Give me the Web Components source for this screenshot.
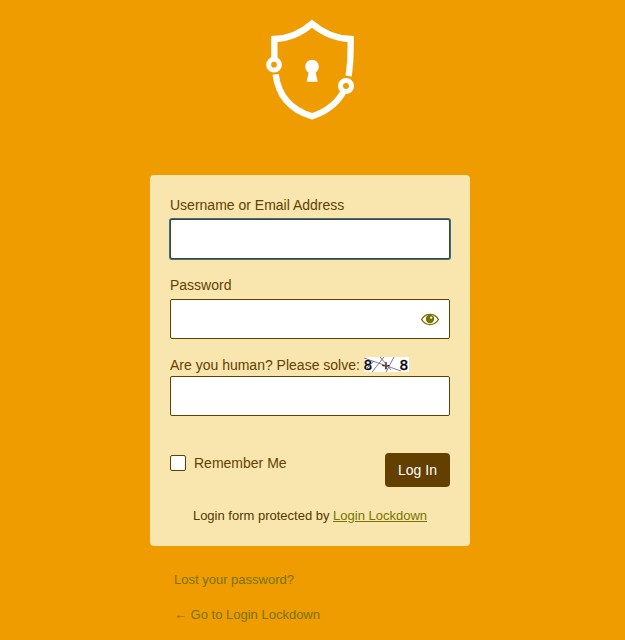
<!DOCTYPE html>
<html lang="en">
<head>
<meta charset="utf-8">
<title>Log In</title>
<style>
html,body{margin:0;height:100%;background:#ef9c00}
body{font:14px/21px "Liberation Sans",Arial,sans-serif;color:#633f00;overflow:hidden}
</style>
</head>
<body>
<login-page></login-page>
<script>
const define = (name, html) => customElements.define(name, class extends HTMLElement {
  constructor() {
    super();
    this.attachShadow({mode: 'open'}).innerHTML = html;
  }
});

define('shield-logo', `
<style>:host{display:block;width:110px;height:120px}svg{display:block}</style>
<svg width="110" height="120" viewBox="0 0 330 360" fill="none" stroke="#fff" stroke-width="19">
  <path d="M58 146V87C98 86 137 71 171 41C206 71 247 86 287 87V112C287 150 285 172 281 198"/>
  <path d="M62 193C70 258 109 300 171 319C214 305 245 281 265 246"/>
  <circle cx="57" cy="164" r="16" stroke-width="15"/>
  <circle cx="273" cy="228" r="16.500" stroke-width="15"/>
  <g fill="#fff" stroke="none"><circle cx="171" cy="170" r="20.500"/><path d="M162 182L155 215H188L181 182Z"/></g>
</svg>`);

define('eye-icon', `
<style>:host{display:block;width:20px;height:20px}svg{display:block}</style>
<svg width="20" height="20" viewBox="0 0 20 20">
  <path d="M1.600 10.500C3.600 7 6.600 5.400 10 5.400S16.400 7 18.400 10.500C16.400 14 13.400 15.600 10 15.600S3.600 14 1.600 10.500Z" fill="none" stroke="#777301" stroke-width="1.400"/>
  <circle cx="10" cy="10" r="4.200" fill="#777301"/>
  <circle cx="11.200" cy="8.700" r="1.100" fill="#fff"/>
</svg>`);

define('captcha-sum', `
<style>:host{display:inline-block;width:45px;height:15px;vertical-align:-2px}svg{display:block}
text{font:14.500px "DejaVu Sans Mono","Liberation Mono",monospace;fill:#000;stroke:#000;stroke-width:.35px}</style>
<svg width="45" height="15" viewBox="0 0 45 15">
  <rect width="45" height="15" fill="#fff"/>
  <text x="-.500" y="13">8</text><text x="18" y="13" style="font-size:13px">+</text><text x="35.500" y="13">8</text>
  <g fill="none" stroke="#7c6686" stroke-width=".9"><path d="M0 1L37 14M8 15L20 0M16 0L27 13M22 15L30 0M1 13L10 4"/></g>
</svg>`);

define('text-field', `
<style>
:host{display:block}
label{display:block;height:var(--label-height,24px)}
.box{box-sizing:border-box;width:280px;height:40px;background:#fff;border:1px solid #633f00;border-radius:2px;display:flex;align-items:center;justify-content:flex-end;padding-right:9px}
:host([focused]) .box{box-shadow:0 0 0 1px #2271b1}
</style>
<label><slot></slot></label><div class="box"><slot name="action"></slot></div>`);

define('check-option', `
<style>:host{display:flex;gap:8px;padding-top:2px}i{box-sizing:border-box;width:16px;height:16px;background:#fff;border:1px solid #633f00;border-radius:2px}
span{line-height:16px}</style><i></i><span><slot></slot></span>`);

define('submit-button', `
<style>:host{display:block}button{display:block;box-sizing:border-box;width:65px;height:34px;padding:0;border:0;border-radius:4px;background:#633f00;color:#fff;font:inherit}</style>
<button><slot></slot></button>`);

define('login-card', `
<style>
:host{display:block;box-sizing:border-box;width:320px;height:371px;background:#f9e6ae;border-radius:4px;padding:20px}
.field{margin-bottom:16px}
.last{--label-height:21px;margin-bottom:37px}
.row{display:flex;justify-content:space-between;align-items:flex-start}
.note{margin-top:18px;text-align:center;font-size:13px;color:#543800}
a{color:#777301;text-decoration:underline}
</style>
<text-field class="field" focused>Username or Email Address</text-field>
<text-field class="field">Password<eye-icon slot="action"></eye-icon></text-field>
<text-field class="last">Are you human? Please solve: <captcha-sum></captcha-sum></text-field>
<div class="row"><check-option>Remember Me</check-option><submit-button>Log In</submit-button></div>
<div class="note">Login form protected by <a>Login Lockdown</a></div>`);

define('login-page', `
<style>
:host{display:block;width:320px;margin-left:150px;padding-top:10px}
shield-logo{margin:0 0 45px 105px}
nav{display:flex;flex-direction:column;gap:14px;padding:23px 24px 0;font-size:13px;color:#777301}
</style>
<shield-logo></shield-logo><login-card></login-card>
<nav><a>Lost your password?</a><a>← Go to Login Lockdown</a></nav>`);
</script>
</body>
</html>
